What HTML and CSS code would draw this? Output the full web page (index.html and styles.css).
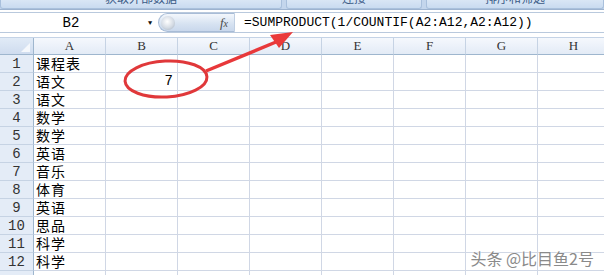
FILE: index.html
```html
<!DOCTYPE html>
<html lang="zh">
<head>
  <meta charset="UTF-8" />
  <title>课程表</title>
  <link rel="stylesheet" href="styles.css">
</head>
<body>
  <div class="window">
    <!-- 功能区底部 -->
    <div class="ribbon">
      <div class="rb-btn rb-1"><span>获取外部数据</span></div>
      <div class="rb-btn rb-2"><span>连接</span></div>
      <div class="rb-btn rb-3"><span>排序和筛选</span></div>
    </div>

    <!-- 编辑栏 -->
    <div class="formula-bar">
      <div class="name-box">B2</div>
      <div class="drop">&#9660;</div>
      <div class="fx-pill">
        <span class="knob"></span>
        <span class="fx">f<small>x</small></span>
      </div>
      <div class="formula">=SUMPRODUCT(1/COUNTIF(A2:A12,A2:A12))</div>
    </div>

    <!-- 表格 -->
    <div class="sheet">
      <div class="corner"></div>
      <div class="col-head">A</div>
      <div class="col-head">B</div>
      <div class="col-head">C</div>
      <div class="col-head">D</div>
      <div class="col-head">E</div>
      <div class="col-head">F</div>
      <div class="col-head">G</div>
      <div class="col-head">H</div>
    </div>

    <!-- 标注 -->
    <svg class="mark" width="604" height="275" viewBox="0 0 604 275">
      <ellipse cx="166" cy="79" rx="41" ry="18" fill="none" stroke="#e0383a" stroke-width="3" transform="rotate(-3 166 79)"/>
      <path d="M206 71 L276 42" stroke="#e8383a" stroke-width="3.5" fill="none"/>
      <polygon points="293,32 270,35 279,48" fill="#ea3a3a"/>
    </svg>

    <div class="watermark">头条 @比目鱼2号</div>
  </div>

  <script>
    const rows = ['课程表', '语文', '语文', '数学', '数学', '英语', '音乐', '体育', '英语', '思品', '科学', '科学', ''];
    const sheet = document.querySelector('.sheet');

    rows.forEach((name, i) => {
      const head = document.createElement('div');
      head.className = 'row-head';
      head.textContent = i < 12 ? i + 1 : '';
      sheet.appendChild(head);

      for (let c = 0; c < 8; c++) {
        const cell = document.createElement('div');
        cell.className = 'cell';
        if (c === 0) cell.textContent = name;
        if (c === 1 && i === 1) {
          cell.textContent = '7';
          cell.classList.add('num');
        }
        sheet.appendChild(cell);
      }
    });
  </script>
</body>
</html>
```

FILE: styles.css
```css
* {
  box-sizing: border-box;
}

body {
  margin: 0;
  background: #ffffff;
  font-family: "Liberation Mono", "Noto Sans CJK SC", monospace;
}

.window {
  position: relative;
  width: 604px;
  height: 275px;
  overflow: hidden;
}

.ribbon {
  display: flex;
  gap: 4px;
  height: 10px;
  background: #c4d6ec;
  border-bottom: 1px solid #9db3cf;
}

.rb-btn {
  height: 9px;
  overflow: hidden;
  text-align: center;
  background: linear-gradient(#d9e6f5, #c9dbf0);
  border: 1px solid #a9c0dc;
  border-top: none;
  border-radius: 0 0 3px 3px;
  font-family: "Noto Sans CJK SC", sans-serif;
  font-size: 12px;
  color: #3a5a86;
}

.rb-btn span {
  display: block;
  margin-top: -10px;
  line-height: 16px;
}

.rb-1 {
  width: 282px;
}

.rb-2 {
  width: 136px;
}

.rb-3 {
  flex: 1;
}

.formula-bar {
  display: flex;
  align-items: center;
  height: 21px;
  margin-top: 2px;
  background: #ffffff;
  border-top: 1px solid #b9c9dd;
  border-bottom: 1px solid #b9c9dd;
}

.name-box {
  width: 142px;
  text-align: center;
  font-size: 14px;
  color: #000;
}

.drop {
  width: 16px;
  font-size: 7px;
  color: #111;
  text-align: center;
}

.fx-pill {
  display: flex;
  align-items: center;
  justify-content: space-between;
  width: 77px;
  height: 19px;
  padding: 0 6px 0 2px;
  border-radius: 10px 0 0 10px;
  background: linear-gradient(#f3f7fc, #d6e2f1 60%, #c9d8ec);
  border: 1px solid #a8bcd6;
  border-right: 1px solid #c0cfe2;
}

.knob {
  width: 14px;
  height: 14px;
  border-radius: 50%;
  background: radial-gradient(circle at 45% 40%, #ffffff, #d4dbe4 55%, #9fabb9);
}

.fx {
  font-family: "Liberation Serif", serif;
  font-style: italic;
  font-size: 13px;
  color: #4a4a4a;
}

.fx small {
  font-size: 10px;
}

.formula {
  padding-left: 9px;
  font-size: 13px;
  color: #000;
  white-space: nowrap;
}

.sheet {
  display: grid;
  grid-template-columns: 34px repeat(8, 72px);
  grid-template-rows: 17px repeat(13, 18px);
  margin-top: 4px;
  border-top: 1px solid #c4d3e6;
}

.corner {
  background: linear-gradient(#e1ebf7, #cfdcef);
  border-right: 1px solid #9eb6ce;
  border-bottom: 1px solid #9eb6ce;
  position: relative;
}

.corner::after {
  content: "";
  position: absolute;
  right: 3px;
  bottom: 2px;
  border-left: 9px solid transparent;
  border-bottom: 9px solid #f5f8fc;
}

.col-head {
  background: linear-gradient(#f5f8fd, #e3ebf6);
  border-right: 1px solid #c6d3e4;
  border-bottom: 1px solid #9eb6ce;
  text-align: center;
  font-family: "Liberation Serif", serif;
  font-size: 13px;
  line-height: 16px;
  color: #333;
}

.row-head {
  background: #e4ecf7;
  border-right: 1px solid #9eb6ce;
  border-bottom: 1px solid #c6d3e4;
  text-align: center;
  font-size: 14px;
  line-height: 18px;
  color: #333;
}

.cell {
  border-right: 1px solid #d0d7e5;
  border-bottom: 1px solid #d0d7e5;
  padding-left: 2px;
  font-family: "Noto Sans CJK SC", sans-serif;
  font-size: 14px;
  letter-spacing: 1px;
  line-height: 17px;
  color: #000;
  white-space: nowrap;
}

.cell.num {
  text-align: right;
  padding-right: 4px;
  font-family: "Liberation Mono", monospace;
  font-size: 14px;
  letter-spacing: 0;
}

.mark {
  position: absolute;
  left: 0;
  top: 0;
  pointer-events: none;
}

.watermark {
  position: absolute;
  right: 10px;
  bottom: 8px;
  font-family: "Noto Sans CJK SC", sans-serif;
  font-size: 16px;
  line-height: 18px;
  color: #8a8a8a;
  text-shadow: 0 0 2px #fff, 0 0 2px #fff;
}
```
